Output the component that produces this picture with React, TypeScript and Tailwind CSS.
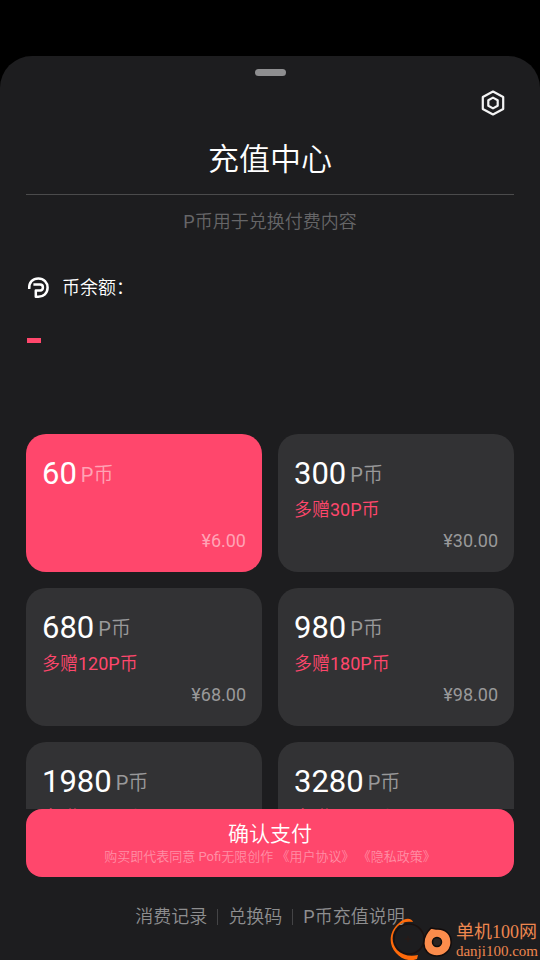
import { useState } from "react";

const packs = [
  { coins: 60, bonus: "", price: "¥6.00" },
  { coins: 300, bonus: "多赠30P币", price: "¥30.00" },
  { coins: 680, bonus: "多赠120P币", price: "¥68.00" },
  { coins: 980, bonus: "多赠180P币", price: "¥98.00" },
  { coins: 1980, bonus: "多赠400P币", price: "¥198.00" },
  { coins: 3280, bonus: "多赠700P币", price: "¥328.00" },
];

function SettingsIcon() {
  return (
    <svg width="26" height="28" viewBox="0 0 26 28" fill="none" stroke="#f4f4f4" strokeWidth="2.2" strokeLinejoin="round" aria-hidden="true">
      <path d="M13 2.5 L23.2 8 V20 L13 25.5 L2.8 20 V8 Z" />
      <path d="M13 8.6 L17.7 11.2 V16.8 L13 19.4 L8.3 16.8 V11.2 Z" />
    </svg>
  );
}

function CoinIcon() {
  return (
    <svg width="24" height="24" viewBox="0 0 24 24" fill="none" stroke="#fff" strokeWidth="2.5" strokeLinejoin="round" aria-hidden="true">
      <path d="M3.2 13 C2.6 6.4 7 2.4 12.4 2.4 C17.8 2.4 21.6 6.4 21.6 11.6 C21.6 17.2 17.4 20.8 12.4 20.8 H9.8 V14.4 H14.2 C17.8 14.4 17.8 8.6 14.2 8.6 H7.4" />
    </svg>
  );
}

function Watermark() {
  return (
    <div className="pointer-events-none absolute right-0 bottom-0 flex h-11 items-end gap-1 pr-0.5">
      <svg width="62" height="44" viewBox="0 0 62 44" aria-hidden="true">
        <circle cx="19" cy="23" r="15" fill="none" stroke="#191110" strokeWidth="1.5" />
        <path d="M18 20 V26 M15 23 H21" stroke="#2a1a17" strokeWidth="1" />
        <path d="M23 6 C22 2 15 1 9 7 C-1 15 -2 29 6 37 C11 43 20 46 27 43 L28 39 C20 41 12 39 7 34 C1 27 1 17 8 10 C12 6 17 5 23 6 Z" fill="#ff6a0a" />
        <path d="M41 12 L46 13 C56 12 62 19 61 28 C60 35 54 40 47 40 C39 40 33 34 34 26 C34 20 37 16 41 12 Z" fill="#fb8c4c" stroke="#120c0c" strokeWidth="1.5" />
        <circle cx="47" cy="26" r="4.5" fill="#2a2422" stroke="#0d0d0d" strokeWidth="1.5" />
      </svg>
      <div className="flex flex-col text-[#ee874f] [font-family:'Liberation_Serif','Noto_Sans_CJK_SC',serif]">
        <span className="text-[18px] leading-5">单机100网</span>
        <span className="text-[15px] leading-[18px]">danji100.com</span>
      </div>
    </div>
  );
}

export default function App() {
  const [selected, setSelected] = useState(60);

  return (
    <div className="relative flex h-screen flex-col overflow-hidden bg-black pt-14 text-white [font-family:Roboto,'Noto_Sans_CJK_SC_DemiLight','Noto_Sans_CJK_SC',sans-serif]">
      <main className="flex min-h-0 flex-1 flex-col rounded-t-[32px] bg-[#1d1d1f] px-[26px]">
        <div className="mt-[13px] h-[7px] w-[31px] shrink-0 self-center rounded-full bg-[#8e8e90]" />
        <button type="button" aria-label="设置" className="mt-[13px] mr-2 self-end">
          <SettingsIcon />
        </button>
        <h1 className="mt-5 border-b border-[#4b4b4c] pb-[11px] text-center text-[31px] leading-[46px]">充值中心</h1>
        <p className="mt-[13px] text-center text-[18px] leading-7 text-[#666668]">P币用于兑换付费内容</p>

        <div className="mt-10 flex items-center gap-3">
          <CoinIcon />
          <span className="text-[18px] leading-6">币余额：</span>
        </div>
        <div className="mt-[38px] mb-[91px] ml-px h-[5px] w-3.5 shrink-0 bg-[#ff476c]" />

        <div className="grid min-h-0 flex-1 auto-rows-[138px] grid-cols-2 gap-4 overflow-y-auto [scrollbar-width:none]">
          {packs.map((pack) => {
            const active = pack.coins === selected;
            return (
              <button
                key={pack.coins}
                type="button"
                aria-pressed={active}
                onClick={() => setSelected(pack.coins)}
                className={`flex flex-col rounded-[20px] px-4 py-5 text-left ${active ? "bg-[#ff476c]" : "bg-[#323234]"}`}
              >
                <span className="flex items-start gap-1">
                  <span className="text-[31px] leading-10">{pack.coins}</span>
                  <span className={`text-[20px] leading-[42px] ${active ? "text-[#ffa3b5]" : "text-[#99999a]"}`}>P币</span>
                </span>
                <span className="text-[18px] leading-7 text-[#ff476c]">{pack.bonus}</span>
                <span className={`mt-auto self-end text-[18px] leading-[22px] ${active ? "text-[#ffa3b5]" : "text-[#99999a]"}`}>
                  {pack.price}
                </span>
              </button>
            );
          })}
        </div>

        <button type="button" className="flex h-[68px] shrink-0 flex-col items-center justify-center rounded-[16px] bg-[#ff476c] pt-0.5">
          <span className="text-[21px] leading-[26px]">确认支付</span>
          <span className="text-[13px] leading-5 text-[#ff8ea5]">购买即代表同意 Pofi无限创作 《用户协议》 《隐私政策》</span>
        </button>

        <nav className="mt-[27px] mb-[30px] flex items-center justify-center text-[18px] leading-[26px] text-[#8e8e8f]">
          <a href="#records" className="pr-2.5">消费记录</a>
          <a href="#redeem" className="border-x border-[#444446] px-2.5 leading-4">兑换码</a>
          <a href="#help" className="pl-2.5">P币充值说明</a>
        </nav>
      </main>
      <Watermark />
    </div>
  );
}
